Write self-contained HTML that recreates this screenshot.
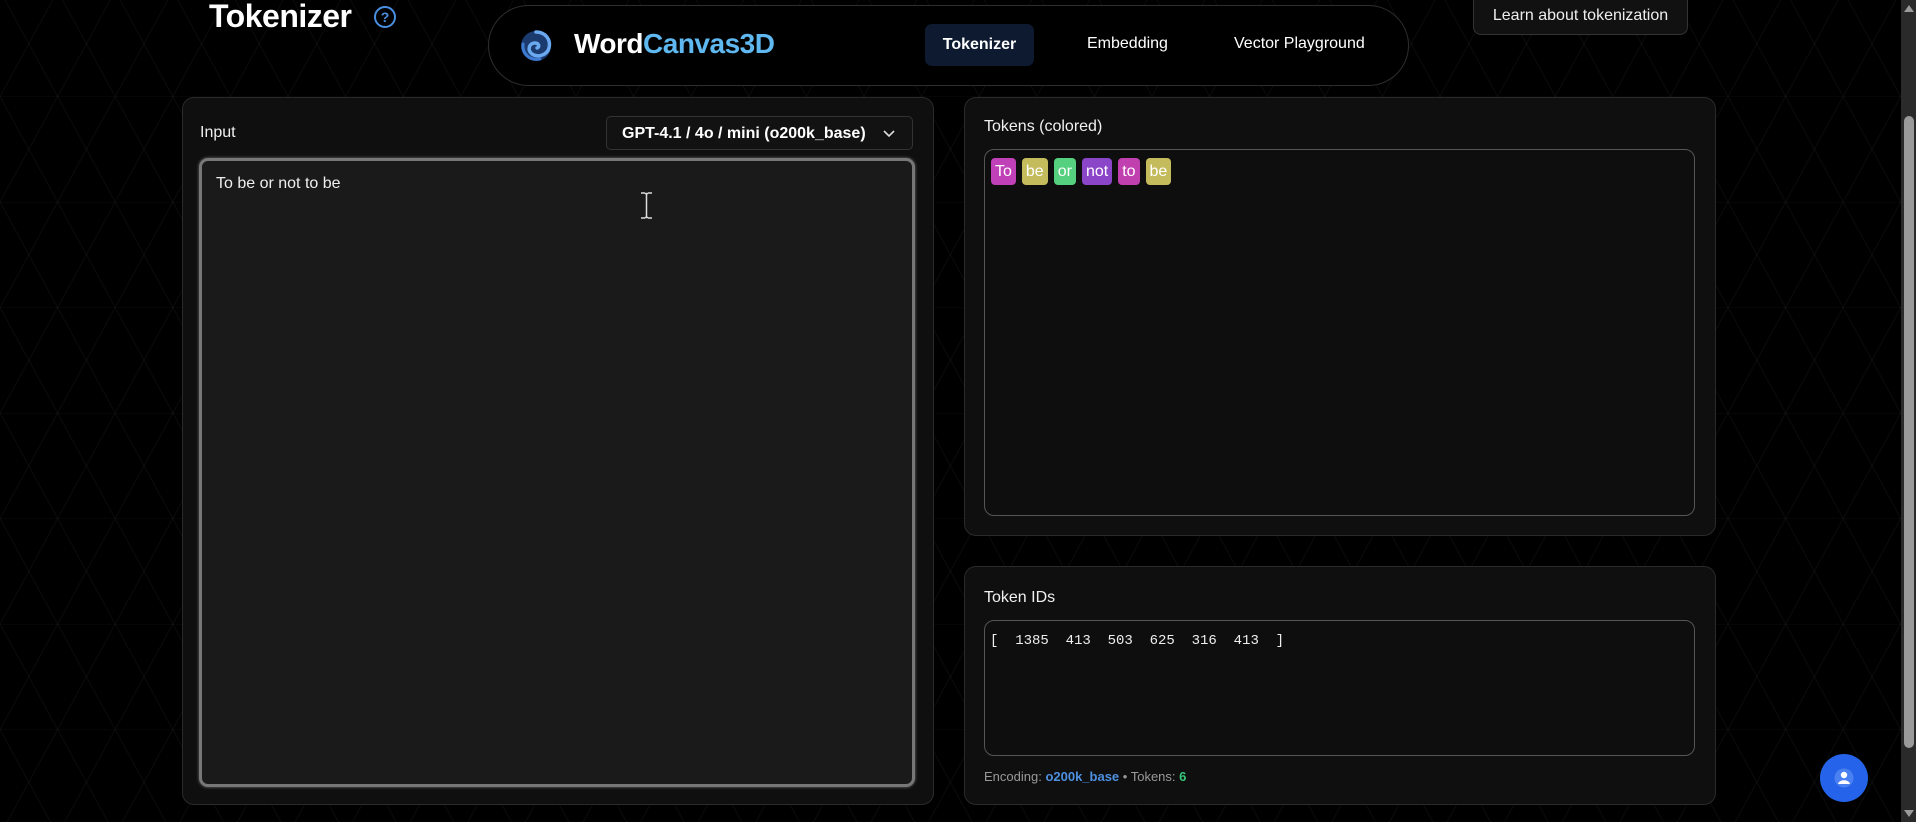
<!DOCTYPE html>
<html><head><meta charset="utf-8"><style>
*{box-sizing:border-box;margin:0;padding:0}
html,body{width:1916px;height:822px;overflow:hidden;background:#000;font-family:"Liberation Sans",sans-serif;color:#eee}
.bg{position:absolute;left:0;top:0}
.abs{position:absolute}
.panel{position:absolute;background:#0f0f0f;border:1px solid #2a2a2a;border-radius:12px}
.lbl{position:absolute;font-size:16px;color:#f0f0f0}
.chip{display:inline-block;height:27px;line-height:27px;padding:0 4px;border-radius:4px;color:#fff;font-size:16px;margin-right:6px}
</style></head><body>
<svg class="bg" width="1916" height="822">
<defs><pattern id="tri" width="115.2" height="105.5" patternUnits="userSpaceOnUse" x="0" y="-9">
<g stroke="rgba(255,255,255,0.045)" stroke-width="1" fill="none">
<line x1="0" y1="0" x2="115.2" y2="0"/>
<line x1="0" y1="0" x2="57.6" y2="105.5"/>
<line x1="115.2" y1="0" x2="57.6" y2="105.5"/>
<line x1="57.6" y1="0" x2="0" y2="105.5"/>
<line x1="57.6" y1="0" x2="115.2" y2="105.5"/>
</g></pattern></defs>
<rect width="1916" height="822" fill="url(#tri)"/>
</svg>

<div class="abs" style="left:209px;top:-2px;font-size:32px;font-weight:bold;color:#fff;letter-spacing:-0.5px">Tokenizer</div>
<svg class="abs" style="left:373px;top:5px" width="24" height="24"><circle cx="12" cy="12" r="10" fill="none" stroke="#4a90e2" stroke-width="2"/><text x="12" y="17" text-anchor="middle" font-size="14" font-weight="bold" fill="#4a90e2" font-family="Liberation Sans">?</text></svg>

<div class="abs" style="left:488px;top:5px;width:921px;height:81px;border:1px solid #2e2e2e;border-radius:41px;background:#000"></div>
<svg class="abs" style="left:518px;top:28px" width="36" height="36" viewBox="0 0 36 36">
<circle cx="18" cy="18" r="15" fill="#1b3a6e"/>
<path d="M18 4 C28 4 33 12 31 20 C29 27 20 30 14 26 C9 22 11 15 17 15 C21 15 22 19 19 20" fill="none" stroke="#6aa8f0" stroke-width="3.5" stroke-linecap="round"/>
<path d="M5 16 C4 26 12 33 22 31" fill="none" stroke="#3d7ad0" stroke-width="3" stroke-linecap="round"/>
</svg>
<div class="abs" style="left:574px;top:28px;font-size:28px;font-weight:bold;color:#fff;letter-spacing:-0.5px">Word<span style="color:#5fb8f0">Canvas3D</span></div>
<div class="abs" style="left:925px;top:24px;width:109px;height:42px;background:#0d1a30;border-radius:7px;font-size:16px;font-weight:bold;line-height:42px;text-align:center;color:#fff">Tokenizer</div>
<div class="abs" style="left:1087px;top:35px;font-size:16px;color:#fff">Embedding</div>
<div class="abs" style="left:1234px;top:35px;font-size:16px;color:#fff">Vector Playground</div>
<div class="abs" style="left:1473px;top:-8px;width:215px;height:43px;border:1px solid #333;border-radius:8px;background:#111;font-size:16px;color:#eee;text-align:center;padding-top:14px">Learn about tokenization</div>

<div class="panel" style="left:182px;top:97px;width:752px;height:708px"></div>
<div class="lbl" style="left:200px;top:124px">Input</div>
<div class="abs" style="left:606px;top:116px;width:307px;height:34px;border:1px solid #333;border-radius:5px;background:#121212;font-size:16px;font-weight:bold;color:#fff;padding:8px 0 0 15px">GPT-4.1 / 4o / mini (o200k_base)<svg style="position:absolute;left:276px;top:13px" width="12" height="8"><path d="M1 1 L6 6 L11 1" fill="none" stroke="#ddd" stroke-width="1.6"/></svg></div>
<div class="abs" style="left:199px;top:158px;width:716px;height:629px;border:3px solid #777;border-radius:9px;background:#1a1a1a;box-shadow:0 0 3px rgba(255,255,255,0.4)"></div>
<div class="abs" style="left:216px;top:175px;font-size:16px;color:#eee">To be or not to be</div>
<svg class="abs" style="left:639px;top:192px" width="15" height="27"><path d="M2 1 H6 M9 1 H13 M7.5 2 V25 M2 26 H6 M9 26 H13 M6 1.5 H9 M6 25.5 H9" stroke="#ddd" stroke-width="1.5" fill="none"/></svg>

<div class="panel" style="left:964px;top:97px;width:752px;height:439px"></div>
<div class="lbl" style="left:984px;top:118px">Tokens (colored)</div>
<div class="abs" style="left:984px;top:149px;width:711px;height:367px;border:1px solid #555;border-radius:10px;background:#0e0e0e"></div>
<div class="abs" style="left:991px;top:158px;white-space:nowrap">
<span class="chip" style="background:#c040b8">To</span><span class="chip" style="background:#c4bc5c">be</span><span class="chip" style="background:#55d07e">or</span><span class="chip" style="background:#8a45c8">not</span><span class="chip" style="background:#c040b0">to</span><span class="chip" style="background:#c4bc5c">be</span></div>

<div class="panel" style="left:964px;top:566px;width:752px;height:239px"></div>
<div class="lbl" style="left:984px;top:589px">Token IDs</div>
<div class="abs" style="left:984px;top:620px;width:711px;height:136px;border:1px solid #555;border-radius:10px;background:#0e0e0e"></div>
<div class="abs" style="left:990px;top:633px;font-family:'Liberation Mono',monospace;font-size:14px;color:#eee;white-space:pre">[  1385  413  503  625  316  413  ]</div>
<div class="abs" style="left:984px;top:769px;font-size:13px;color:#999">Encoding: <span style="color:#4d90e0;font-weight:bold">o200k_base</span> • Tokens: <span style="color:#34c77a;font-weight:bold">6</span></div>

<div class="abs" style="left:1820px;top:754px;width:48px;height:48px;border-radius:50%;background:#2563eb"></div>
<svg class="abs" style="left:1834px;top:768px" width="20" height="20"><circle cx="10" cy="10" r="9.5" fill="#4a80f0"/><circle cx="10" cy="7" r="3.2" fill="#fff"/><path d="M4 16 C5 11 15 11 16 16 Z" fill="#fff"/></svg>

<div class="abs" style="left:1901px;top:0;width:15px;height:822px;background:#2a2a2a"></div>
<div class="abs" style="left:1904px;top:116px;width:10px;height:632px;background:#9a9a9a;border-radius:5px"></div>
<svg class="abs" style="left:1903px;top:3px" width="12" height="10"><path d="M6 2 L11 9 H1 Z" fill="#9a9a9a"/></svg>
<svg class="abs" style="left:1903px;top:809px" width="12" height="10"><path d="M1 1 H11 L6 8 Z" fill="#9a9a9a"/></svg>
</body></html>
